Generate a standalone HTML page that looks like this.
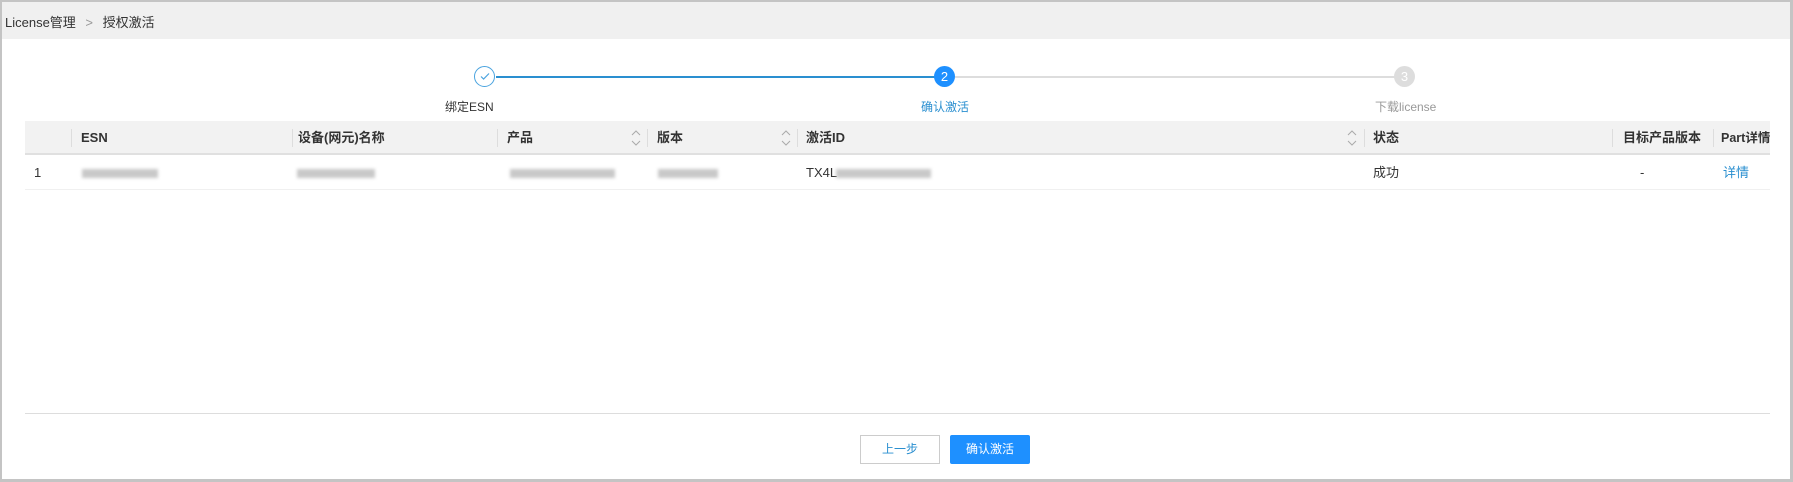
<!DOCTYPE html>
<html><head><meta charset="utf-8"><style>
*{margin:0;padding:0;box-sizing:border-box}
body{width:1793px;height:482px;overflow:hidden;background:#fff;font-family:"Liberation Sans","Noto Sans CJK SC",sans-serif;font-size:13px;color:#333;position:relative}
.frame{position:absolute;left:0;top:0;width:1793px;height:482px;border:3px solid #c4c4c4;border-top-width:2px;border-left-width:2px}
.hdr{position:absolute;left:2px;top:2px;right:3px;height:37px;background:#f0f0f0}
.a{position:absolute;white-space:nowrap}
.r{position:absolute;top:155px;height:35px;line-height:35px;white-space:nowrap}
.blur{position:absolute;height:9px;background:#bbb;filter:blur(1.5px);opacity:.8}
.c{position:absolute;width:21px;height:21px;border-radius:50%;text-align:center;line-height:21px;font-size:13px;color:#fff}
.th{position:absolute;top:121px;height:34px;line-height:34px;font-weight:bold;font-size:13px;color:#333;white-space:nowrap}
.sep{position:absolute;top:129px;width:1px;height:18px;background:#ddd}
.sort{position:absolute;top:128px;width:12px;height:20px}
</style></head><body>
<div class="hdr"></div>
<div class="a" style="left:5px;top:12px;font-size:13px;color:#333">License管理 <span style="color:#999;margin:0 6px">&gt;</span> 授权激活</div>

<div class="a" style="left:496px;top:76px;width:449px;height:2px;background:#2a8fd0"></div>
<div class="a" style="left:955px;top:76px;width:440px;height:2px;background:#ddd"></div>
<div class="c" style="left:474px;top:66px;border:1.5px solid #4aa3df;background:#fff;line-height:18px">
<svg width="12" height="12" viewBox="0 0 12 12" style="margin-top:3px"><path d="M2 6.5l2.6 2.5L10 3.5" stroke="#4aa3df" stroke-width="1.2" fill="none"/></svg></div>
<div class="c" style="left:934px;top:66px;background:#1e90ff">2</div>
<div class="c" style="left:1394px;top:66px;background:#ddd">3</div>
<div class="a" style="left:445px;top:98px;font-size:12px;color:#333">绑定ESN</div>
<div class="a" style="left:921px;top:98px;font-size:12px;color:#2a8fd0">确认激活</div>
<div class="a" style="left:1375px;top:98px;font-size:12px;color:#999">下载license</div>

<div class="a" style="left:25px;top:121px;width:1745px;height:34px;background:#f2f2f2;border-bottom:2px solid #e0e0e0"></div>
<div class="sep" style="left:71px"></div><div class="sep" style="left:292px"></div><div class="sep" style="left:497px"></div><div class="sep" style="left:647px"></div><div class="sep" style="left:797px"></div><div class="sep" style="left:1364px"></div><div class="sep" style="left:1612px"></div><div class="sep" style="left:1713px"></div>
<div class="th" style="left:81px">ESN</div>
<div class="th" style="left:298px">设备(网元)名称</div>
<div class="th" style="left:507px">产品</div>
<div class="th" style="left:657px">版本</div>
<div class="th" style="left:806px">激活ID</div>
<div class="th" style="left:1373px">状态</div>
<div class="th" style="left:1623px">目标产品版本</div>
<div class="th" style="left:1721px;font-size:12.5px">Part详情</div>
<svg class="sort" style="left:630px" viewBox="0 0 12 20"><path d="M2 7l4-4 4 4M2 13l4 4 4-4" stroke="#aaa" fill="none"/></svg>
<svg class="sort" style="left:780px" viewBox="0 0 12 20"><path d="M2 7l4-4 4 4M2 13l4 4 4-4" stroke="#aaa" fill="none"/></svg>
<svg class="sort" style="left:1346px" viewBox="0 0 12 20"><path d="M2 7l4-4 4 4M2 13l4 4 4-4" stroke="#aaa" fill="none"/></svg>

<div class="a" style="left:25px;top:155px;width:1745px;height:35px;border-bottom:1px solid #f0f0f0"></div>
<div class="r" style="left:34px">1</div>
<div class="blur" style="left:82px;top:169px;width:76px"></div>
<div class="blur" style="left:297px;top:169px;width:78px"></div>
<div class="blur" style="left:510px;top:169px;width:105px"></div>
<div class="blur" style="left:658px;top:169px;width:60px"></div>
<div class="r" style="left:806px">TX4L</div>
<div class="blur" style="left:836px;top:169px;width:95px"></div>
<div class="r" style="left:1373px">成功</div>
<div class="r" style="left:1640px">-</div>
<div class="r" style="left:1723px;color:#2a8fd0">详情</div>

<div class="a" style="left:25px;top:413px;width:1745px;height:1px;background:#ddd"></div>
<div class="a" style="left:860px;top:435px;width:80px;height:29px;border:1px solid #ccc;text-align:center;line-height:27px;font-size:12px;color:#2a8fd0">上一步</div>
<div class="a" style="left:950px;top:435px;width:80px;height:29px;background:#1e90ff;border-radius:2px;text-align:center;line-height:29px;font-size:12px;color:#fff">确认激活</div>
<div class="frame"></div>
</body></html>
